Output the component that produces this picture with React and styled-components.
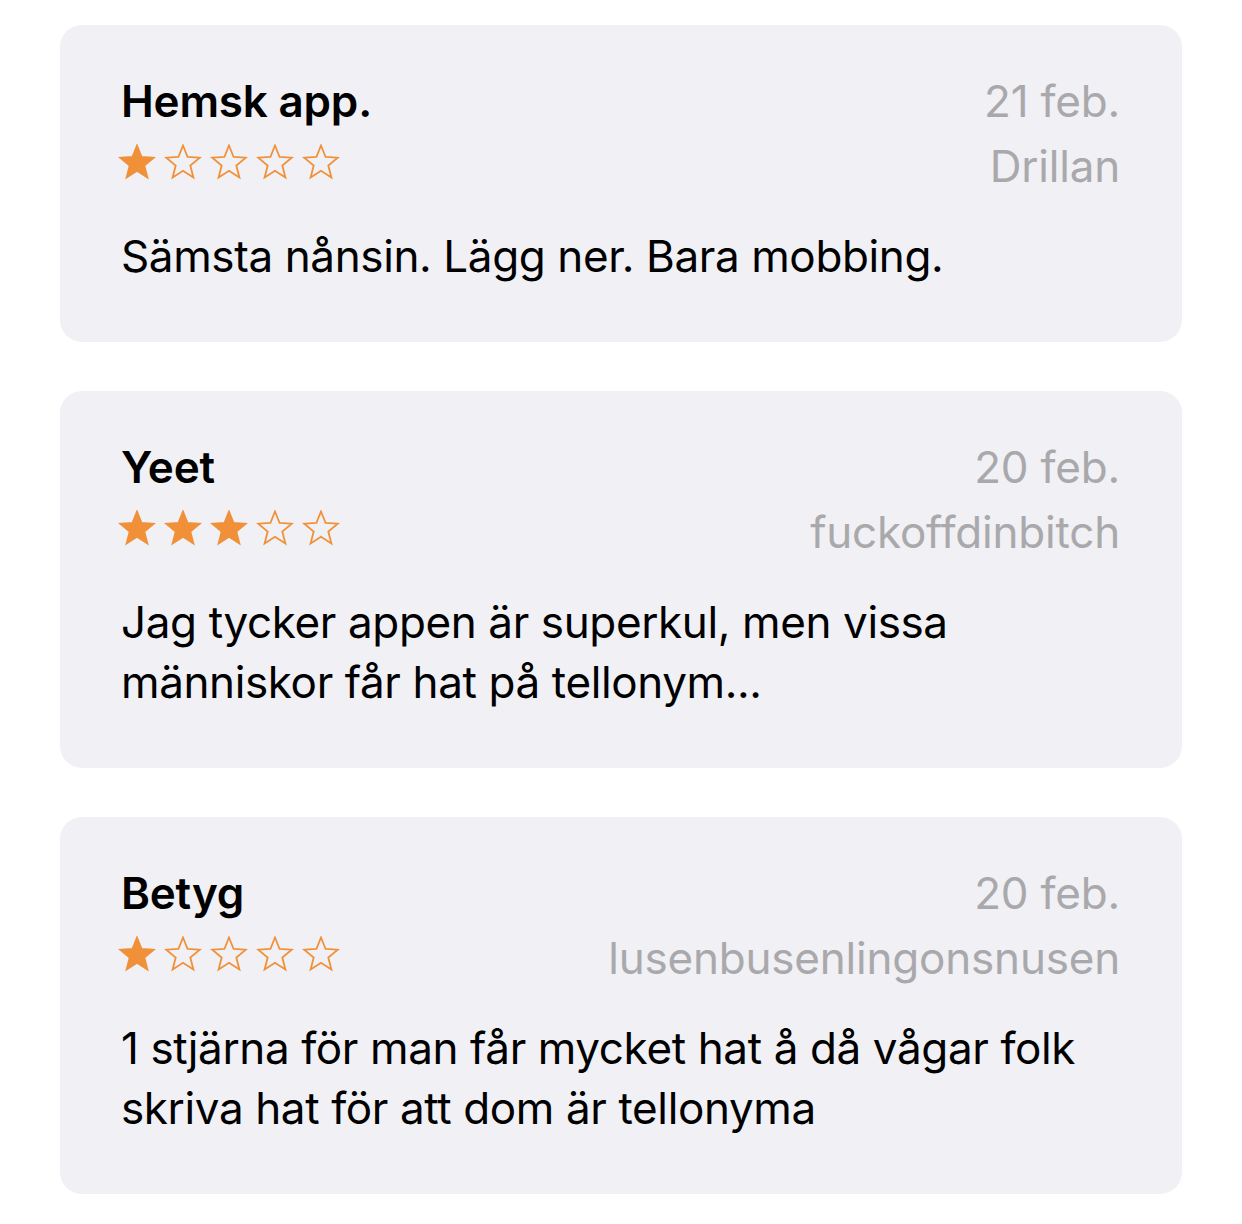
import React from "react";
import styled, { createGlobalStyle } from "styled-components";

const Global = createGlobalStyle`
  html, body { margin: 0; padding: 0; background: #ffffff; }
  body { font-family: Inter, "Noto Sans", "DejaVu Sans", sans-serif; -webkit-font-smoothing: antialiased; }
`;

const Page = styled.div`
  display: flex;
  flex-direction: column;
  gap: 49px;
  padding: 25px 60px 30px 60px;
  width: 1122px;
`;

const Card = styled.div`
  background: #f0f0f5;
  border-radius: 22px;
  padding: 44px 62px 56px 61px;
  display: flex;
  flex-direction: column;
  gap: 27px;
`;

const Header = styled.div`
  display: grid;
  grid-template-columns: auto 1fr;
  grid-template-rows: 65px 65px;
`;

const Title = styled.div`
  font-size: 44px;
  line-height: 65px;
  font-weight: 600;
  color: #000;
  letter-spacing: -0.2px;
`;

const Meta = styled.div`
  font-size: 44px;
  line-height: 65px;
  color: #a9a9ac;
  text-align: right;
  letter-spacing: -0.2px;
`;

const Stars = styled.div`
  display: flex;
  gap: 8px;
  margin: 10px 0 0 -3px;
  height: 38px;
`;

const Body = styled.div`
  font-size: 44px;
  line-height: 60px;
  color: #000;
  letter-spacing: -0.38px;
`;

const STAR = "M19 1.5 L23.6 13 L35.8 13.7 L26.3 21.6 L29.4 33.5 L19 26.8 L8.6 33.5 L11.7 21.6 L2.2 13.7 L14.4 13 Z";

const Star = ({ filled }) => (
  <svg width="38" height="38" viewBox="0 0 38 38">
    <path
      d={STAR}
      fill={filled ? "#f0913a" : "none"}
      stroke="#f0913a"
      strokeWidth="1.8"
      strokeLinejoin="miter"
    />
  </svg>
);

const reviews = [
  { title: "Hemsk app.", date: "21 feb.", user: "Drillan", stars: 1, text: "Sämsta nånsin. Lägg ner. Bara mobbing." },
  { title: "Yeet", date: "20 feb.", user: "fuckoffdinbitch", stars: 3, text: "Jag tycker appen är superkul, men vissa människor får hat på tellonym..." },
  { title: "Betyg", date: "20 feb.", user: "lusenbusenlingonsnusen", stars: 1, text: "1 stjärna för man får mycket hat å då vågar folk skriva hat för att dom är tellonyma" },
];

export default function App() {
  return (
    <>
      <Global />
      <Page>
        {reviews.map((r) => (
          <Card key={r.title}>
            <Header>
              <Title>{r.title}</Title>
              <Meta>{r.date}</Meta>
              <Stars>
                {[0, 1, 2, 3, 4].map((i) => (
                  <Star key={i} filled={i < r.stars} />
                ))}
              </Stars>
              <Meta>{r.user}</Meta>
            </Header>
            <Body>{r.text}</Body>
          </Card>
        ))}
      </Page>
    </>
  );
}
